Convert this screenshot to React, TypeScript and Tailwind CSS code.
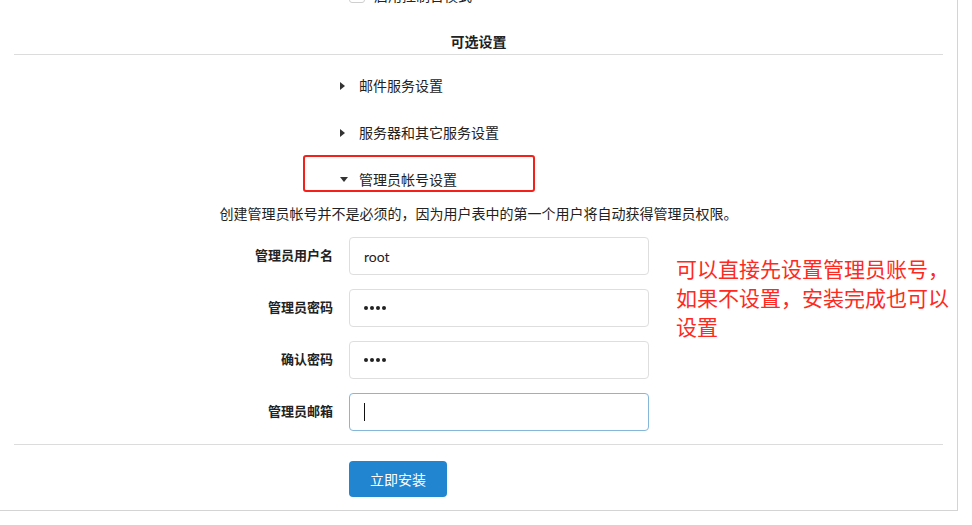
import React from "react";

const FONT = 'Lato, "Noto Sans CJK SC", "Noto Sans", sans-serif';

function Caret({ open }: { open?: boolean }) {
  return open ? (
    <svg width="8" height="5" viewBox="0 0 8 5" className="block">
      <path d="M0 0 L8 0 L4 5 Z" fill="#333" />
    </svg>
  ) : (
    <svg width="5" height="8" viewBox="0 0 5 8" className="block">
      <path d="M0 0 L5 4 L0 8 Z" fill="#333" />
    </svg>
  );
}

function AccItem({ label, open }: { label: string; open?: boolean }) {
  return (
    <div className="h-[47px] flex items-center pl-[326px]">
      <div className="w-[19px] flex items-center">
        <Caret open={open} />
      </div>
      <span className="text-[14px] text-[#222]">{label}</span>
    </div>
  );
}

function Field({
  label,
  children,
  focus,
}: {
  label: string;
  children?: React.ReactNode;
  focus?: boolean;
}) {
  return (
    <div className="flex items-center h-[38px]">
      <div className="w-[319px] text-right text-[13px] font-bold text-[#222]">{label}</div>
      <div
        className={
          "ml-[16px] w-[300px] h-[38px] rounded-[4px] border bg-white flex items-center px-[14px] text-[14px] text-[#222] " +
          (focus ? "border-[#85b7d9]" : "border-[#dedede]")
        }
      >
        {children}
      </div>
    </div>
  );
}

function Dots() {
  return (
    <div className="flex gap-[2px]">
      <span className="w-[4px] h-[4px] rounded-full bg-[#222]" />
      <span className="w-[4px] h-[4px] rounded-full bg-[#222]" />
      <span className="w-[4px] h-[4px] rounded-full bg-[#222]" />
      <span className="w-[4px] h-[4px] rounded-full bg-[#222]" />
    </div>
  );
}

export default function App() {
  return (
    <div className="w-[972px] h-[525px] bg-white overflow-hidden relative" style={{ fontFamily: FONT }}>
      <div className="flow-root w-[958px] h-[511px] border-r border-b border-[#d4d4d4] bg-white">
        <div className="px-[14px]">
          {/* partially visible checkbox row */}
          <div className="mt-[-14px] h-[18px] flex items-center pl-[335px]">
            <div className="w-[16px] h-[16px] rounded-[3px] border border-[#cfcfcf] bg-white" />
            <span className="ml-[9px] text-[14px] text-[#222]">启用控制台模式</span>
          </div>

          <div className="mt-[28px] pb-[2px] border-b border-[#dcdcdc] text-center text-[14px] leading-[20px] font-bold text-[#222]">
            可选设置
          </div>

          <div className="mt-[7px]">
            <AccItem label="邮件服务设置" />
            <AccItem label="服务器和其它服务设置" />
            <AccItem label="管理员帐号设置" open />
          </div>

          <div className="text-center text-[14px] leading-[22px] text-[#222]">
            创建管理员帐号并不是必须的，因为用户表中的第一个用户将自动获得管理员权限。
          </div>

          <div className="mt-[12px] flex flex-col gap-[14px]">
            <Field label="管理员用户名">root</Field>
            <Field label="管理员密码">
              <Dots />
            </Field>
            <Field label="确认密码">
              <Dots />
            </Field>
            <Field label="管理员邮箱" focus>
              <span className="w-[1px] h-[18px] bg-[#111]" />
            </Field>
          </div>

          <div className="mt-[13px] border-b border-[#dcdcdc]" />

          <div className="mt-[16px] pl-[335px]">
            <button className="w-[98px] h-[36px] rounded-[4px] bg-[#2185d0] text-white text-[14px]">
              立即安装
            </button>
          </div>
        </div>
      </div>

      {/* annotation overlay */}
      <div className="absolute left-[303px] top-[155px] w-[232px] h-[37px] border-2 border-[#f5201a] rounded-[3px]" />
      <div
        className="absolute left-[676px] top-[254px] text-[21px] leading-[29px] text-[#fe2a22]"
        style={{ fontFamily: '"Noto Sans CJK SC", sans-serif' }}
      >
        可以直接先设置管理员账号，
        <br />
        如果不设置，安装完成也可以
        <br />
        设置
      </div>
    </div>
  );
}
